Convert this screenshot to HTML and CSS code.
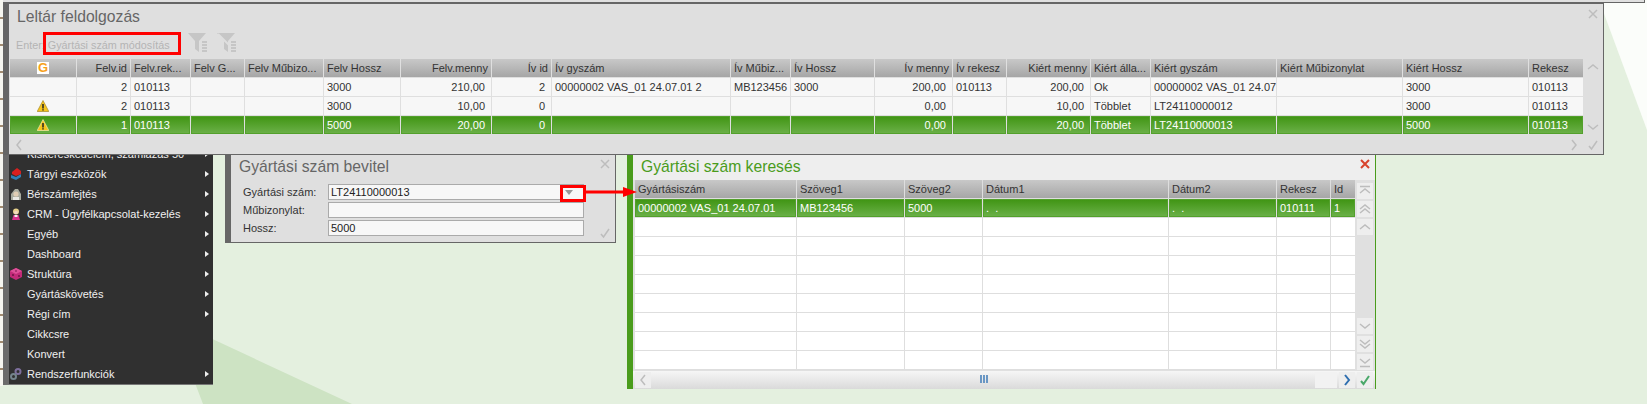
FILE: index.html
```html
<!DOCTYPE html>
<html lang="hu">
<head>
    <meta charset="UTF-8">
    <title>Leltár feldolgozás</title>
    <link rel="stylesheet" href="styles.css">
</head>
<body>
    <svg class="wallpaper" viewBox="0 0 1647 404">
        <polygon points="1599,0 1647,0 1647,130" fill="#fbfdfa"/>
        <polygon points="150,310 352,404 203,404 190,370" fill="#cde3c3"/>
    </svg>
    <div class="left-strip"></div>
    <div class="back-window"></div>

    <!-- főmenü -->
    <div class="menu">
        <div class="menu-item"><span class="menu-icon"></span>Kiskereskedelem, számlázás 50<i class="arrow"></i></div>
        <div class="menu-item"><span class="menu-icon">
            <svg viewBox="0 0 12 12"><polygon points="1,7 6,9 11,6 11,9 6,12 1,10" fill="#2f7fb5"/><polygon points="2,4 7,0 11,3 11,6 6,8 2,6" fill="#d8201f"/></svg>
        </span>Tárgyi eszközök<i class="arrow"></i></div>
        <div class="menu-item"><span class="menu-icon">
            <svg viewBox="0 0 12 12"><path d="M1 12V6l4-5h3l3 5v6z" fill="#a9aca0"/><circle cx="6" cy="6" r="2.6" fill="#e0cdb4"/><rect x="3" y="9" width="6" height="3" fill="#e9e9e4"/></svg>
        </span>Bérszámfejtés<i class="arrow"></i></div>
        <div class="menu-item"><span class="menu-icon">
            <svg viewBox="0 0 12 12"><circle cx="6" cy="3.5" r="3" fill="#e8d28c"/><circle cx="6" cy="4.5" r="1.8" fill="#f1d9c4"/><path d="M2 12l1.5-5h5L10 12z" fill="#d6338c"/><rect x="4.5" y="7" width="3" height="2" fill="#f4f4f4"/></svg>
        </span>CRM - Ügyfélkapcsolat-kezelés<i class="arrow"></i></div>
        <div class="menu-item"><span class="menu-icon"></span>Egyéb<i class="arrow"></i></div>
        <div class="menu-item"><span class="menu-icon"></span>Dashboard<i class="arrow"></i></div>
        <div class="menu-item"><span class="menu-icon">
            <svg viewBox="0 0 12 12"><polygon points="6,0 12,3 12,9 6,12 0,9 0,3" fill="#c22a78"/><polygon points="6,0 12,3 6,6 0,3" fill="#de4f98"/><circle cx="3" cy="7" r="1" fill="#6e1445"/><circle cx="9" cy="8" r="1" fill="#6e1445"/><circle cx="6" cy="3" r=".8" fill="#6e1445"/></svg>
        </span>Struktúra<i class="arrow"></i></div>
        <div class="menu-item"><span class="menu-icon"></span>Gyártáskövetés<i class="arrow"></i></div>
        <div class="menu-item"><span class="menu-icon"></span>Régi cím<i class="arrow"></i></div>
        <div class="menu-item"><span class="menu-icon"></span>Cikkcsre</div>
        <div class="menu-item"><span class="menu-icon"></span>Konvert</div>
        <div class="menu-item"><span class="menu-icon">
            <svg viewBox="0 0 12 12"><circle cx="8" cy="3.5" r="2.5" fill="none" stroke="#7d6f9c" stroke-width="2"/><circle cx="3.5" cy="8.5" r="2.5" fill="none" stroke="#74848c" stroke-width="2"/></svg>
        </span>Rendszerfunkciók<i class="arrow"></i></div>
    </div>

    <!-- Leltár feldolgozás -->
    <div class="window window-main">
        <div class="win-title">Leltár feldolgozás</div>
        <svg class="icon win-close" viewBox="0 0 12 12"><path d="M2 2l8 8M10 2l-8 8"/></svg>
        <div class="toolbar">
            <span class="hint">Enter: Gyártási szám módosítás</span>
            <div class="red-box red-box-hint"></div>
            <svg class="funnel funnel-one" viewBox="0 0 20 20"><polygon points="0,0 18,0 11,8 11,19 7,16 7,8" fill="#c6c6c6"/><path d="M14 9h5M14 12h5M14 15h5M14 18h5" stroke="#c6c6c6" stroke-width="2"/></svg>
            <svg class="funnel funnel-two" viewBox="0 0 20 20"><polygon points="0,0 18,0 11,8 11,19 7,16 7,8" fill="#c6c6c6"/><path d="M1 1l18 18" stroke="#dfdfdf" stroke-width="2"/><path d="M14 9h5M14 12h5M14 15h5M14 18h5" stroke="#c6c6c6" stroke-width="2"/></svg>
        </div>
        <div class="main-body">
            <div class="grid grid-main">
                <div class="row head">
                    <div class="cell center"><span class="g-icon">G</span></div>
                    <div class="cell r">Felv.id</div>
                    <div class="cell">Felv.rek...</div>
                    <div class="cell">Felv G...</div>
                    <div class="cell">Felv Műbizo...</div>
                    <div class="cell">Felv Hossz</div>
                    <div class="cell r">Felv.menny</div>
                    <div class="cell r">Ív id</div>
                    <div class="cell">Ív gyszám</div>
                    <div class="cell">Ív Műbiz...</div>
                    <div class="cell">Ív Hossz</div>
                    <div class="cell r">Ív menny</div>
                    <div class="cell">Ív rekesz</div>
                    <div class="cell r">Kiért menny</div>
                    <div class="cell">Kiért álla...</div>
                    <div class="cell">Kiért gyszám</div>
                    <div class="cell">Kiért Műbizonylat</div>
                    <div class="cell">Kiért Hossz</div>
                    <div class="cell">Rekesz</div>
                </div>
                <div class="row">
                    <div class="cell"></div>
                    <div class="cell r">2</div>
                    <div class="cell">010113</div>
                    <div class="cell"></div>
                    <div class="cell"></div>
                    <div class="cell">3000</div>
                    <div class="cell amt">210,00</div>
                    <div class="cell amt">2</div>
                    <div class="cell">00000002 VAS_01 24.07.01 2</div>
                    <div class="cell">MB123456</div>
                    <div class="cell">3000</div>
                    <div class="cell amt">200,00</div>
                    <div class="cell">010113</div>
                    <div class="cell amt">200,00</div>
                    <div class="cell">Ok</div>
                    <div class="cell">00000002 VAS_01 24.07</div>
                    <div class="cell"></div>
                    <div class="cell">3000</div>
                    <div class="cell">010113</div>
                </div>
                <div class="row">
                    <div class="cell center"><svg class="warn" viewBox="0 0 12 12"><polygon points="6,.5 11.8,11.5 .2,11.5" fill="#f6c51d" stroke="#a58a2a" stroke-width=".7"/><path d="M6 4v4.4M6 9.3v1.2" stroke="#222" stroke-width="1.5"/></svg></div>
                    <div class="cell r">2</div>
                    <div class="cell">010113</div>
                    <div class="cell"></div>
                    <div class="cell"></div>
                    <div class="cell">3000</div>
                    <div class="cell amt">10,00</div>
                    <div class="cell amt">0</div>
                    <div class="cell"></div>
                    <div class="cell"></div>
                    <div class="cell"></div>
                    <div class="cell amt">0,00</div>
                    <div class="cell"></div>
                    <div class="cell amt">10,00</div>
                    <div class="cell">Többlet</div>
                    <div class="cell">LT24110000012</div>
                    <div class="cell"></div>
                    <div class="cell">3000</div>
                    <div class="cell">010113</div>
                </div>
                <div class="row sel">
                    <div class="cell center"><svg class="warn" viewBox="0 0 12 12"><polygon points="6,.5 11.8,11.5 .2,11.5" fill="#f6c51d" stroke="#f4e9b0" stroke-width=".7"/><path d="M6 4v4.4M6 9.3v1.2" stroke="#222" stroke-width="1.5"/></svg></div>
                    <div class="cell r">1</div>
                    <div class="cell">010113</div>
                    <div class="cell"></div>
                    <div class="cell"></div>
                    <div class="cell">5000</div>
                    <div class="cell amt">20,00</div>
                    <div class="cell amt">0</div>
                    <div class="cell"></div>
                    <div class="cell"></div>
                    <div class="cell"></div>
                    <div class="cell amt">0,00</div>
                    <div class="cell"></div>
                    <div class="cell amt">20,00</div>
                    <div class="cell">Többlet</div>
                    <div class="cell">LT24110000013</div>
                    <div class="cell"></div>
                    <div class="cell">5000</div>
                    <div class="cell">010113</div>
                </div>
            </div>
            <div class="main-scroll">
                <svg class="icon" viewBox="0 0 12 12"><path d="M1 8l5-4 5 4"/></svg>
                <svg class="icon" viewBox="0 0 12 12"><path d="M1 4l5 4 5-4"/></svg>
            </div>
        </div>
        <div class="main-foot">
            <svg class="icon" viewBox="0 0 12 12"><path d="M8 1L4 6l4 5"/></svg>
            <svg class="icon foot-next" viewBox="0 0 12 12"><path d="M4 1l4 5-4 5"/></svg>
            <svg class="icon" viewBox="0 0 12 12"><path d="M2 7l2.5 3L10 2"/></svg>
        </div>
    </div>

    <!-- Gyártási szám bevitel -->
    <div class="window window-input">
        <div class="win-title">Gyártási szám bevitel</div>
        <svg class="icon win-close" viewBox="0 0 12 12"><path d="M2 2l8 8M10 2l-8 8"/></svg>
        <div class="form">
            <label>Gyártási szám:</label>
            <div class="field">LT24110000013<i class="drop"></i></div>
            <label>Műbizonylat:</label>
            <div class="field"></div>
            <label>Hossz:</label>
            <div class="field">5000</div>
        </div>
        <svg class="icon form-ok" viewBox="0 0 12 12"><path d="M2 7l2.5 3L10 2"/></svg>
    </div>

    <!-- Gyártási szám keresés -->
    <div class="window window-search">
        <div class="win-title">Gyártási szám keresés</div>
        <div class="btn search-close"><svg class="icon" viewBox="0 0 12 12"><path d="M2 2l8 8M10 2l-8 8"/></svg></div>
        <div class="search-body">
            <div class="grid grid-search">
                <div class="row head">
                    <div class="cell">Gyártásiszám</div>
                    <div class="cell">Szöveg1</div>
                    <div class="cell">Szöveg2</div>
                    <div class="cell">Dátum1</div>
                    <div class="cell">Dátum2</div>
                    <div class="cell">Rekesz</div>
                    <div class="cell">Id</div>
                </div>
                <div class="row sel">
                    <div class="cell">00000002 VAS_01 24.07.01</div>
                    <div class="cell">MB123456</div>
                    <div class="cell">5000</div>
                    <div class="cell">.&nbsp;&nbsp;.</div>
                    <div class="cell">.&nbsp;&nbsp;.</div>
                    <div class="cell">010111</div>
                    <div class="cell">1</div>
                </div>
                <div class="row"><div class="cell"></div><div class="cell"></div><div class="cell"></div><div class="cell"></div><div class="cell"></div><div class="cell"></div><div class="cell"></div></div>
                <div class="row"><div class="cell"></div><div class="cell"></div><div class="cell"></div><div class="cell"></div><div class="cell"></div><div class="cell"></div><div class="cell"></div></div>
                <div class="row"><div class="cell"></div><div class="cell"></div><div class="cell"></div><div class="cell"></div><div class="cell"></div><div class="cell"></div><div class="cell"></div></div>
                <div class="row"><div class="cell"></div><div class="cell"></div><div class="cell"></div><div class="cell"></div><div class="cell"></div><div class="cell"></div><div class="cell"></div></div>
                <div class="row"><div class="cell"></div><div class="cell"></div><div class="cell"></div><div class="cell"></div><div class="cell"></div><div class="cell"></div><div class="cell"></div></div>
                <div class="row"><div class="cell"></div><div class="cell"></div><div class="cell"></div><div class="cell"></div><div class="cell"></div><div class="cell"></div><div class="cell"></div></div>
                <div class="row"><div class="cell"></div><div class="cell"></div><div class="cell"></div><div class="cell"></div><div class="cell"></div><div class="cell"></div><div class="cell"></div></div>
                <div class="row"><div class="cell"></div><div class="cell"></div><div class="cell"></div><div class="cell"></div><div class="cell"></div><div class="cell"></div><div class="cell"></div></div>
            </div>
            <div class="search-side">
                <div class="btn"><svg class="icon" viewBox="0 0 12 12"><path d="M1 1.5h10M1 8l5-4 5 4"/></svg></div>
                <div class="btn"><svg class="icon" viewBox="0 0 12 12"><path d="M1 6l5-4 5 4M1 10l5-4 5 4"/></svg></div>
                <div class="btn"><svg class="icon" viewBox="0 0 12 12"><path d="M1 8l5-4 5 4"/></svg></div>
                <div class="side-gap"></div>
                <div class="btn"><svg class="icon" viewBox="0 0 12 12"><path d="M1 4l5 4 5-4"/></svg></div>
                <div class="btn"><svg class="icon" viewBox="0 0 12 12"><path d="M1 2l5 4 5-4M1 6l5 4 5-4"/></svg></div>
                <div class="btn"><svg class="icon" viewBox="0 0 12 12"><path d="M1 3l5 4 5-4M1 10.5h10"/></svg></div>
            </div>
        </div>
        <div class="search-foot">
            <div class="btn"><svg class="icon" viewBox="0 0 12 12"><path d="M8 1L4 6l4 5"/></svg></div>
            <div class="thumb"><i></i><i></i><i></i></div>
            <div class="foot-blank"></div>
            <div class="btn btn-next"><svg class="icon" viewBox="0 0 12 12"><path d="M4 1l4 5-4 5"/></svg></div>
            <div class="btn btn-ok"><svg class="icon" viewBox="0 0 12 12"><path d="M2 7l2.5 3L10 2"/></svg></div>
        </div>
    </div>

    <!-- piros jelölés -->
    <div class="red-box red-box-drop"></div>
    <svg class="red-arrow" viewBox="0 0 52 12"><rect x="0" y="4.5" width="38" height="3" fill="#f00"/><polygon points="37,1 51,6 37,11" fill="#f00"/></svg>
</body>
</html>
```

FILE: styles.css
```css
html, body {
    margin: 0;
    height: 100%;
}
body {
    position: relative;
    width: 1647px;
    height: 404px;
    overflow: hidden;
    background: #e4f0df;
    font-family: "Liberation Sans", Arial, sans-serif;
    font-size: 11px;
    color: #333;
}
.wallpaper {
    position: absolute;
    left: 0;
    top: 0;
    width: 1647px;
    height: 404px;
}
.left-strip {
    position: absolute;
    left: 0;
    top: 0;
    width: 3px;
    height: 386px;
    background: repeating-linear-gradient(#f6f6f0 0 17px, #a08a70 17px 19px, #f6f6f0 19px 27px);
}
.back-window {
    position: absolute;
    left: 3px;
    top: 0;
    width: 1642px;
    height: 3px;
    box-sizing: border-box;
    background: #e0e0e0;
    border-bottom: 1px solid #666;
    border-right: 1px solid #666;
}

/* menu */
.menu {
    position: absolute;
    left: 3px;
    top: 144px;
    width: 210px;
    height: 241px;
    box-sizing: border-box;
    background: #303030;
    border-left: 6px solid #6b6b6b;
    border-bottom: 1px solid #777;
}
.menu-item {
    display: flex;
    align-items: center;
    height: 20px;
    color: #f0f0f0;
    padding-right: 4px;
}
.menu-icon {
    width: 18px;
    padding-left: 1px;
    box-sizing: border-box;
    display: flex;
    flex: none;
}
.menu-icon svg {
    width: 12px;
    height: 12px;
}
.arrow {
    margin-left: auto;
    border-left: 4px solid #eee;
    border-top: 3px solid transparent;
    border-bottom: 3px solid transparent;
}

/* windows */
.window {
    position: absolute;
    box-sizing: border-box;
    background: #dfdfdf;
    border: 1px solid #666;
    border-left: 6px solid #666;
}
.win-title {
    font-size: 15.7px;
    color: #666;
    line-height: 26px;
    height: 26px;
    padding-left: 8px;
}
.icon {
    width: 12px;
    height: 12px;
    fill: none;
    stroke: #bdbdbd;
    stroke-width: 1.5;
    display: block;
}
.win-close {
    position: absolute;
    right: 4px;
    top: 4px;
}
.window-main {
    left: 3px;
    top: 3px;
    width: 1601px;
    height: 152px;
    z-index: 2;
}
.toolbar {
    position: relative;
    height: 29px;
    display: flex;
    align-items: center;
    padding-left: 7px;
}
.hint {
    color: #b4b4b4;
    font-size: 10.8px;
}
.red-box {
    position: absolute;
    box-sizing: border-box;
    border: 3px solid #f00;
}
.red-box-hint {
    left: 34px;
    top: 2px;
    width: 138px;
    height: 23px;
}
.funnel {
    position: absolute;
    top: 3px;
    width: 20px;
    height: 20px;
}
.funnel-one {
    left: 179px;
}
.funnel-two {
    left: 208px;
}
.main-body {
    display: flex;
    padding-left: 1px;
}

/* grids */
.grid {
    display: grid;
    gap: 1px;
    grid-auto-rows: 18px;
}
.grid-main {
    grid-template-columns: 66px 53px 59px 53px 78px 76px 90px 59px 178px 59px 83px 77px 53px 83px 59px 125px 125px 125px 54px;
}
.grid-search {
    grid-template-columns: 161px 107px 77px 185px 107px 53px 24px;
    background: #dedede;
}
.row {
    display: contents;
}
.cell {
    background: #f7f7f7;
    line-height: 18px;
    padding: 0 3px;
    overflow: hidden;
    white-space: nowrap;
}
.grid-search .cell {
    background: #fff;
}
.head .cell,
.grid-search .head .cell {
    background: linear-gradient(#c8c8c8, #a6a6a6);
}
.sel .cell,
.grid-search .sel .cell {
    background: linear-gradient(#3f9412, #6cb14a);
    box-shadow: inset 0 0 0 1px #53a02c;
    color: #fff;
}
.r {
    text-align: right;
}
.amt {
    text-align: right;
    padding-right: 6px;
}
.center {
    display: flex;
    align-items: center;
    justify-content: center;
    padding: 0;
}
.g-icon {
    width: 12px;
    height: 12px;
    line-height: 12px;
    background: #fff;
    color: #f7a11a;
    font-weight: bold;
    font-size: 13px;
    text-align: center;
}
.warn {
    width: 12px;
    height: 12px;
}
.main-scroll {
    width: 20px;
    height: 76px;
    padding: 2px 0;
    box-sizing: border-box;
    display: flex;
    flex-direction: column;
    justify-content: space-between;
    align-items: center;
}
.main-foot {
    display: flex;
    align-items: center;
    height: 19px;
    padding: 0 4px;
}
.foot-next {
    margin-left: auto;
    margin-right: 7px;
}

/* input dialog */
.window-input {
    left: 225px;
    top: 153px;
    width: 391px;
    height: 90px;
}
.form {
    display: grid;
    grid-template-columns: 85px 256px;
    grid-auto-rows: 16px;
    row-gap: 2px;
    padding: 4px 0 0 12px;
    align-items: center;
}
.field {
    height: 16px;
    box-sizing: border-box;
    line-height: 14px;
    border: 1px solid #aaa;
    background: #f7f7f7;
    padding-left: 2px;
    color: #222;
    position: relative;
}
.drop {
    position: absolute;
    right: 10px;
    top: 5px;
    border-top: 5px solid #999;
    border-left: 4px solid transparent;
    border-right: 4px solid transparent;
}
.form-ok {
    position: absolute;
    right: 4px;
    bottom: 3px;
}

/* search dialog */
.window-search {
    left: 627px;
    top: 153px;
    width: 749px;
    height: 236px;
    background: #e0e0e0;
    border-color: #4a9c1c;
    z-index: 1;
}
.window-search .win-title {
    background: #eee;
    color: #4a9c1c;
    padding-left: 8px;
}
.search-close {
    position: absolute;
    right: 2px;
    top: 2px;
    background: #eaeaea;
}
.search-close .icon {
    stroke: #d8432c;
    stroke-width: 2;
}
.search-body {
    display: flex;
    padding-left: 2px;
}
.search-side {
    width: 18px;
    height: 190px;
    padding: 3px 0 0 2px;
    box-sizing: border-box;
    display: flex;
    flex-direction: column;
    gap: 2px;
}
.side-gap {
    flex: 1;
}
.btn {
    width: 16px;
    height: 16px;
    flex: none;
    background: #eee;
    display: flex;
    align-items: center;
    justify-content: center;
}
.search-foot {
    position: relative;
    display: flex;
    height: 18px;
    padding: 1px 2px 0;
    margin-top: 1px;
    box-sizing: border-box;
    background: linear-gradient(#f6f6f6, #dadada);
}
.thumb {
    position: absolute;
    left: 347px;
    top: 4px;
    display: flex;
    gap: 1px;
}
.thumb i {
    width: 2px;
    height: 8px;
    background: #6a97c4;
}
.foot-blank {
    width: 22px;
    height: 16px;
    margin-left: auto;
    margin-right: 2px;
    background: #f2f2f2;
}
.btn-next .icon {
    stroke: #2f6fb0;
    stroke-width: 2;
}
.btn-ok {
    margin-left: 2px;
}
.btn-ok .icon {
    stroke: #4aa86a;
    stroke-width: 2;
}

/* red marks */
.red-box-drop {
    left: 560px;
    top: 185px;
    width: 26px;
    height: 17px;
    z-index: 3;
}
.red-arrow {
    position: absolute;
    left: 586px;
    top: 186px;
    width: 52px;
    height: 12px;
    z-index: 3;
}
```
